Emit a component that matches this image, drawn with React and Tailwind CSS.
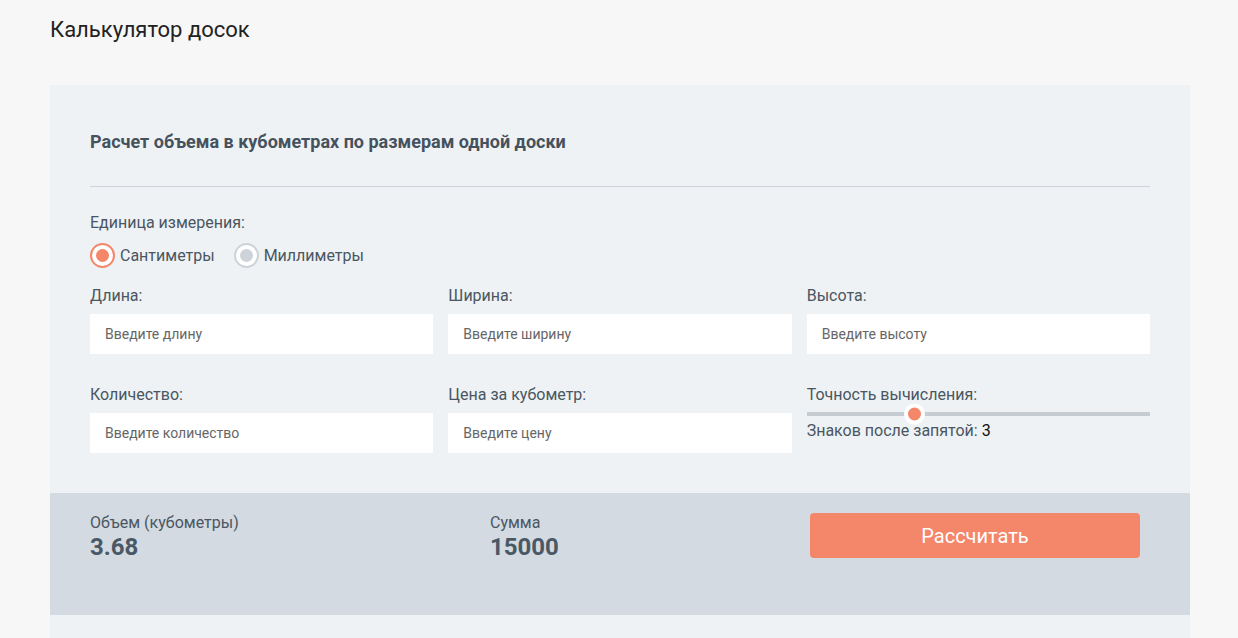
export default function App() {
  const font = { fontFamily: "Roboto, 'Noto Sans', sans-serif" };
  return (
    <div className="min-h-[638px] bg-[#f7f7f7] pl-[50px] pr-[48px] pt-[16px]" style={font}>
      <h1 className="text-[22px] leading-[28px] text-[#222] font-normal">Калькулятор досок</h1>
      <div className="mt-[41px] bg-[#eef2f5] pb-[40px]">
        <div className="px-[40px] pt-[45px]">
          <h2 className="text-[18px] leading-[24px] font-bold text-[#45525e]">
            Расчет объема в кубометрах по размерам одной доски
          </h2>
          <div className="mt-[32px] h-px bg-[#cdd3d8]" />
          <div className="mt-[26px] text-[16px] leading-[20px] text-[#4a5661]">Единица измерения:</div>
          <div className="mt-[10px] flex items-center gap-[19px] text-[16px] text-[#4a5661]">
            <label className="flex items-center gap-[5px]">
              <span className="flex h-[25px] w-[25px] items-center justify-center rounded-full border-2 border-[#f4866a] bg-white">
                <span className="h-[13px] w-[13px] rounded-full bg-[#f4866a]" />
              </span>
              Сантиметры
            </label>
            <label className="flex items-center gap-[5px]">
              <span className="flex h-[25px] w-[25px] items-center justify-center rounded-full border-2 border-[#cdd3d8] bg-white">
                <span className="h-[13px] w-[13px] rounded-full bg-[#cdd3d8]" />
              </span>
              Миллиметры
            </label>
          </div>
          <div className="mt-[18px] grid grid-cols-3 gap-x-[15px]">
            <Field label="Длина:" placeholder="Введите длину" />
            <Field label="Ширина:" placeholder="Введите ширину" />
            <Field label="Высота:" placeholder="Введите высоту" />
          </div>
          <div className="mt-[31px] grid grid-cols-3 gap-x-[15px]">
            <Field label="Количество:" placeholder="Введите количество" />
            <Field label="Цена за кубометр:" placeholder="Введите цену" />
            <div>
              <div className="text-[16px] leading-[20px] text-[#4a5661]">Точность вычисления:</div>
              <div className="relative mt-[7px] h-[4px] bg-[#c5ccd2]">
                <span className="absolute left-[97px] top-1/2 h-[21px] w-[21px] -translate-y-1/2 rounded-full border-[4px] border-white bg-[#f4866a]" />
              </div>
              <div className="mt-[5px] text-[16px] leading-[20px] text-[#4a5661]">
                Знаков после запятой: <span className="text-[#111]">3</span>
              </div>
            </div>
          </div>
        </div>
        <div className="mt-[40px] flex h-[122px] items-start bg-[#d3dae1] pl-[40px] pr-[50px] pt-[20px]">
          <div className="w-[400px]">
            <div className="text-[16px] leading-[20px] text-[#4a5661]">Объем (кубометры)</div>
            <div className="text-[24px] leading-[28px] font-bold text-[#4a5866]">3.68</div>
          </div>
          <div className="w-[320px]">
            <div className="text-[16px] leading-[20px] text-[#4a5661]">Сумма</div>
            <div className="text-[24px] leading-[28px] font-bold text-[#4a5866]">15000</div>
          </div>
          <button className="h-[45px] w-[330px] rounded-[4px] bg-[#f4866a] text-[20px] text-white">
            Рассчитать
          </button>
        </div>
      </div>
    </div>
  );
}

function Field({ label, placeholder }) {
  return (
    <div>
      <div className="text-[16px] leading-[20px] text-[#4a5661]">{label}</div>
      <input
        className="mt-[8px] block h-[40px] w-full bg-white px-[15px] text-[14px] text-[#333] outline-none placeholder:text-[#666]"
        placeholder={placeholder}
        style={{ fontFamily: "Roboto, 'Noto Sans', sans-serif" }}
      />
    </div>
  );
}
